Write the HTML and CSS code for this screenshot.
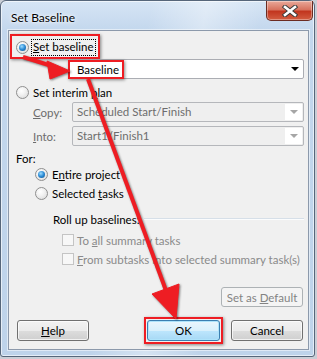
FILE: index.html
```html
<!DOCTYPE html>
<html lang="en">
<head>
  <meta charset="UTF-8" />
  <title>Set Baseline</title>
  <link rel="stylesheet" href="styles.css">
</head>
<body>
  <div class="screen">
    <div class="window">
      <div class="titlebar">
        <span class="title">Set Baseline</span>
        <div class="close">
          <svg width="18" height="12" viewBox="0 0 18 12">
            <path d="M4 2 L14 10 M14 2 L4 10" stroke="#3b3b3b" stroke-width="4.5" stroke-linecap="square"/>
            <path d="M4 2 L14 10 M14 2 L4 10" stroke="#fff" stroke-width="2.6" stroke-linecap="square"/>
          </svg>
        </div>
      </div>

      <div class="client">
        <div class="hl-row">
          <span class="radio on"></span>
          <span class="focus"><u>S</u>et baseline</span>
        </div>
        <div class="combo first">
          <span class="hl-text">Baseline</span>
          <span class="drop"><i class="tri"></i></span>
        </div>

        <div class="row interim"><span class="radio"></span><span class="txt">Set interim <u>p</u>lan</span></div>

        <div class="field copy">
          <span class="lbl"><u>C</u>opy:</span>
          <div class="combo dis"><span class="val">Scheduled Start/Finish</span><span class="drop"><i class="tri"></i></span></div>
        </div>
        <div class="field into">
          <span class="lbl"><u>I</u>nto:</span>
          <div class="combo dis"><span class="val">Start1/Finish1</span><span class="drop"><i class="tri"></i></span></div>
        </div>

        <div class="row for">For:</div>
        <div class="row opt entire"><span class="radio on"></span><span class="txt">E<u>n</u>tire project</span></div>
        <div class="row opt selected"><span class="radio"></span><span class="txt">Selected <u>t</u>asks</span></div>

        <div class="row rollup"><span class="txt">Roll up baselines:</span><span class="sep"></span></div>
        <div class="row chk first-chk"><span class="box"></span><span class="txt">To <u>a</u>ll summary tasks</span></div>
        <div class="row chk second-chk"><span class="box"></span><span class="txt"><u>F</u>rom subtasks into selected summary task(s)</span></div>

        <div class="default-row">
          <button class="btn disabled">Set as <u>D</u>efault</button>
        </div>

        <div class="buttons">
          <button class="btn help"><u>H</u>elp</button>
          <span class="spacer"></span>
          <span class="ok-wrap"><button class="btn ok">OK</button></span>
          <button class="btn cancel">Cancel</button>
        </div>
      </div>
    </div>

    <svg class="arrows" width="317" height="359" viewBox="0 0 317 359">
      <g fill="#ee1d23" stroke="#ee1d23">
        <line x1="23" y1="57" x2="52" y2="66" stroke-width="4"/>
        <polygon points="47,61 50,79 70,71" stroke-width="1"/>
        <line x1="88" y1="79" x2="168" y2="296" stroke-width="4"/>
        <polygon points="152,294 179,284 176,319" stroke-width="1"/>
      </g>
    </svg>
  </div>
</body>
</html>
```

FILE: styles.css
```css
body {
  margin: 0;
  background: #c9ced6;
  font-family: Lato, 'Liberation Sans', sans-serif;
  font-size: 11.5px;
  color: #000;
}

.screen {
  position: relative;
  width: 317px;
  height: 359px;
  overflow: hidden;
}

.window {
  width: 315px;
  height: 357px;
  box-sizing: border-box;
  border: 1px solid #56667a;
  border-radius: 6px 6px 3px 3px;
  background:
    linear-gradient(100deg, rgba(255,255,255,0) 40%, rgba(255,255,255,0.35) 55%, rgba(255,255,255,0) 70%),
    linear-gradient(to bottom, #d6e5f5 0, #c3d7ed 30px, #bed3ea 100%);
  box-shadow: inset 0 0 0 1px rgba(255,255,255,0.6);
  display: flex;
  flex-direction: column;
}

.titlebar {
  height: 29px;
  display: flex;
  align-items: flex-start;
  flex-shrink: 0;
}

.title {
  margin: 9px 0 0 10px;
  font-size: 12px;
  color: #000;
  text-shadow: 0 0 6px #fff, 0 0 3px #fff;
}

.close {
  margin-left: auto;
  margin-right: 1px;
  width: 47px;
  height: 20px;
  box-sizing: border-box;
  border: 1px solid #6b2c22;
  border-top: none;
  border-radius: 0 0 5px 5px;
  background: linear-gradient(to bottom, #e9a99a 0, #d7735f 45%, #c2361f 55%, #d35d41 100%);
  box-shadow: inset 0 0 0 1px rgba(255,255,255,0.35);
  display: flex;
  align-items: center;
  justify-content: center;
}

.client {
  flex: 1;
  margin: 0 5px 6px 7px;
  border: 1px solid #8c99ab;
  background: #f0f0f0;
  padding: 0 4px 0 7px;
  box-shadow: 0 0 0 1px rgba(255,255,255,0.5);
  display: flex;
  flex-direction: column;
}

.txt {
  white-space: nowrap;
}

/* red highlight boxes */
.hl-row {
  align-self: flex-start;
  margin: 3px 0 0 -6px;
  height: 25px;
  box-sizing: border-box;
  border: 2px solid #ee1d23;
  padding: 3px 2px 1px 4px;
  display: flex;
  align-items: center;
  box-shadow: 1px 1px 3px rgba(0,0,0,0.45);
}

.hl-row .radio {
  margin-right: 0;
}

.focus {
  margin-left: 2px;
  padding: 0 1px 1px;
  border: 1px dotted #000;
  line-height: 14px;
  white-space: nowrap;
}

.hl-text {
  align-self: flex-start;
  height: 19px;
  box-sizing: border-box;
  margin-left: -5px;
  border: 2px solid #ee1d23;
  padding: 0 3px 0 7px;
  line-height: 15px;
  background: #fff;
  box-shadow: 1px 1px 3px rgba(0,0,0,0.45);
}

/* radios and checkboxes */
.radio {
  width: 13px;
  height: 13px;
  box-sizing: border-box;
  border-radius: 50%;
  border: 1px solid #8f8f8f;
  background: radial-gradient(circle at 40% 35%, #fff 0, #f2f2f2 40%, #d6d6d6 100%);
  margin-right: 4px;
  position: relative;
  flex-shrink: 0;
}

.radio.on::after {
  content: "";
  position: absolute;
  left: 2px;
  top: 2px;
  width: 7px;
  height: 7px;
  border-radius: 50%;
  background: radial-gradient(circle at 40% 35%, #9ddcff 0, #2a8ad4 50%, #0f4e88 100%);
}

.box {
  width: 12px;
  height: 12px;
  box-sizing: border-box;
  border: 1px solid #c4c4c4;
  background: #f7f7f7;
  margin-right: 3px;
  flex-shrink: 0;
}

.row {
  display: flex;
  align-items: center;
  height: 16px;
}

.interim { margin-top: 4px; height: 18px; }
.for { margin-top: 4px; }
.opt { margin-left: 19px; }
.entire { margin-top: 0; }
.selected { margin-top: 3px; }

.rollup {
  margin-top: 10px;
  margin-left: 37px;
}

.sep {
  flex: 1;
  height: 1px;
  margin-left: 4px;
  margin-top: -1px;
  background: #d6dfe8;
  border-bottom: 1px solid #fbfcfd;
}

.chk {
  margin-left: 46px;
  color: #8a8a8a;
}

.first-chk { margin-top: 5px; }
.second-chk { margin-top: 3px; }

/* combos */
.combo {
  height: 20px;
  box-sizing: border-box;
  border: 1px solid #abadb3;
  border-radius: 2px;
  background: #fff;
  display: flex;
  align-items: stretch;
}

.combo.first {
  margin-left: 56px;
}

.val {
  flex: 1;
  padding-left: 4px;
  line-height: 18px;
  color: #6d6d6d;
}

.combo .drop {
  margin-left: auto;
  width: 17px;
  display: flex;
  align-items: center;
  justify-content: center;
}

.tri {
  width: 0;
  height: 0;
  border-left: 4px solid transparent;
  border-right: 4px solid transparent;
  border-top: 4px solid #000;
}

.combo.dis {
  flex: 1;
  border-color: #b5b7bb;
  background: #efefef;
}

.combo.dis .drop {
  background: #fff;
  margin: 1px;
}

.combo.dis .tri {
  border-top-color: #a6a6a6;
}

.field {
  display: flex;
  align-items: center;
}

.copy { margin-top: 1px; }
.into { margin-top: 4px; }

.lbl {
  width: 39px;
  margin-left: 17px;
  color: #6d6d6d;
}

/* buttons */
.btn {
  font: inherit;
  height: 21px;
  box-sizing: border-box;
  border: 1px solid #707070;
  border-radius: 3px;
  background: linear-gradient(to bottom, #f2f2f2 0, #ebebeb 50%, #dddddd 50%, #cfcfcf 100%);
  box-shadow: inset 0 0 0 1px rgba(255,255,255,0.7);
  color: #000;
  padding: 0;
}

.default-row {
  margin-top: 20px;
  display: flex;
  justify-content: flex-end;
  padding-right: 1px;
}

.btn.disabled {
  width: 82px;
  height: 20px;
  border-color: #adb2b5;
  background: #f4f4f4;
  color: #838383;
  box-shadow: none;
}

.buttons {
  margin-top: 13px;
  height: 21px;
  display: flex;
  align-items: center;
  padding-right: 1px;
}

.help {
  margin-left: 1px;
  width: 72px;
}

.spacer { flex: 1; }

.ok-wrap {
  border: 2px solid #ee1d23;
  padding: 1px;
  display: flex;
  margin-right: 8px;
  box-shadow: 1px 1px 3px rgba(0,0,0,0.45);
}

.ok {
  width: 73px;
  border-color: #3c7fb1;
  background: linear-gradient(to bottom, #eaf6fd 0, #d9f0fc 50%, #bee6fd 50%, #a7d9f5 100%);
  box-shadow: inset 0 0 0 1px #aee3fb;
}

.cancel { width: 72px; }

.arrows {
  position: absolute;
  left: 0;
  top: 0;
  pointer-events: none;
  filter: drop-shadow(1px 1px 1px rgba(0,0,0,0.5));
}
```
